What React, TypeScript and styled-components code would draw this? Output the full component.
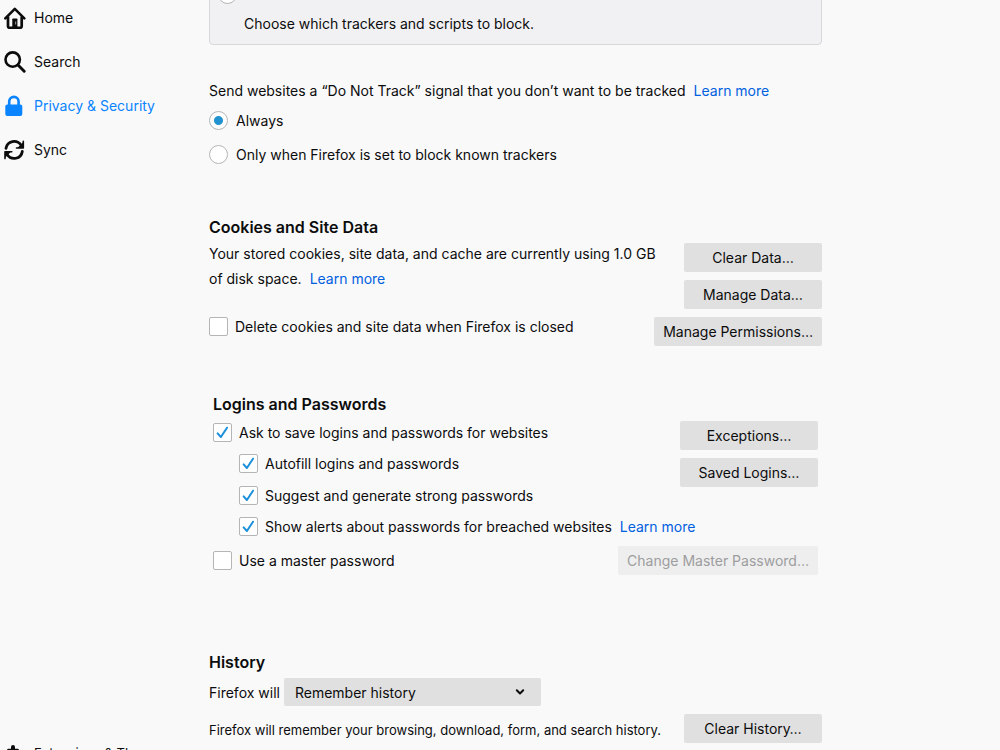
import React from "react";
import styled, { createGlobalStyle, css } from "styled-components";

const GlobalStyle = createGlobalStyle`
  *, *::before, *::after { box-sizing: border-box; }
  body {
    margin: 0;
    background: #f9f9f9;
    color: #0c0c0d;
    font-family: Inter, "Liberation Sans", sans-serif;
    font-size: 14px;
    line-height: 25px;
  }
  button, select, input { font: inherit; color: inherit; margin: 0; }
`;

const Page = styled.div`
  display: flex;
  height: 100vh;
  overflow: hidden;
`;

const Sidebar = styled.aside`
  display: flex;
  flex-direction: column;
  flex: 0 0 209px;
`;

const Categories = styled.nav`
  display: flex;
  flex-direction: column;
  margin-top: -4px;
`;

const Footer = styled.div`
  margin-top: auto;
  margin-bottom: -25px;
`;

const Category = styled.a<{ $active?: boolean; $small?: boolean }>`
  display: flex;
  align-items: center;
  gap: 8px;
  height: 44px;
  padding-left: 4px;
  color: ${(p) => (p.$active ? "#0a84ff" : "#0c0c0d")};
  font-size: ${(p) => (p.$small ? 13 : 14)}px;
  line-height: 24px;
  text-decoration: none;
  white-space: nowrap;

  svg { width: 22px; height: 22px; flex: none; }
`;

const Content = styled.main`
  flex: 1;
  min-width: 0;
  max-width: 613px;
`;

const TrackingCard = styled.div`
  margin-top: -40px;
  padding: 24px 8px 8px;
  border: 1px solid #d8d8da;
  border-radius: 4px;
  background: #f1f1f3;
`;

const CardDescription = styled.p`
  margin: 7px 0 0 26px;
`;

const Section = styled.section<{ $top: number; $inset?: boolean }>`
  margin-top: ${(p) => p.$top}px;
  padding: ${(p) => (p.$inset ? "0 4px" : "0")};
`;

const Heading = styled.h2`
  margin: 0;
  font-size: 16px;
  font-weight: 600;
  line-height: 28px;
`;

const Text = styled.p<{ $small?: boolean }>`
  margin: 0;
  font-size: ${(p) => (p.$small ? 13 : 14)}px;
`;

const Link = styled.a`
  margin-left: 8px;
  color: #0060df;
  text-decoration: none;
`;

const Columns = styled.div<{ $top?: number; $align?: string }>`
  display: flex;
  justify-content: space-between;
  align-items: ${(p) => p.$align || "flex-start"};
  gap: 20px;
  padding-top: ${(p) => p.$top || 0}px;
`;

const Column = styled.div`
  flex: 1;
  min-width: 0;
`;

const Buttons = styled.div<{ $top: number }>`
  display: flex;
  flex-direction: column;
  gap: 8px;
  padding-top: ${(p) => p.$top}px;
`;

const Button = styled.button`
  flex: none;
  min-width: 138px;
  height: 29px;
  padding: 0 9px;
  border: 0;
  border-radius: 2px;
  background: #e0e0e0;
  line-height: 29px;
  white-space: nowrap;

  &:disabled { background: #eeeeee; color: #9d9d9e; }
`;

const Options = styled.div<{ $indent?: boolean }>`
  display: flex;
  flex-direction: column;
  padding: ${(p) => (p.$indent ? "1px 0 0 26px" : "0")};
`;

const Option = styled.div<{ $height: number }>`
  display: flex;
  align-items: center;
  height: ${(p) => p.$height}px;
  white-space: nowrap;

  label { padding-left: 8px; }
  span + label { padding-left: 7px; }
`;

const control = css`
  appearance: none;
  flex: none;
  display: block;
  width: 19px;
  height: 19px;
  border: 1px solid #b5b5b7;
  background: #fff center / 100% no-repeat;
`;

const Radio = styled.input.attrs({ type: "radio" })`
  ${control}
  border-radius: 50%;
  &:checked { background-image: radial-gradient(circle, #2292d0 4px, transparent 5px); }
`;

const CheckFrame = styled.span`
  display: grid;
  flex: none;

  > * { grid-area: 1 / 1; }
  svg { width: 19px; height: 19px; pointer-events: none; visibility: hidden; }
  input:checked + svg { visibility: visible; }
`;

const CheckInput = styled.input.attrs({ type: "checkbox" })`
  ${control}
  border-radius: 2px;
`;

const HistoryRow = styled.div`
  display: flex;
  align-items: center;
  gap: 4px;
  padding-top: 2px;
`;

const SelectFrame = styled.span`
  display: grid;
  align-items: center;
  width: 257px;

  > * { grid-area: 1 / 1; }
  svg { justify-self: end; width: 10px; height: 8px; margin-right: 16px; pointer-events: none; }
`;

const Select = styled.select`
  appearance: none;
  height: 28px;
  padding: 0 11px;
  border: 0;
  border-radius: 2px;
  background: #e0e0e0;
`;

type CheckboxProps = { id: string; label: string; height: number; checked?: boolean; children?: React.ReactNode };

function Checkbox({ id, label, height, checked, children }: CheckboxProps) {
  return (
    <Option $height={height}>
      <CheckFrame>
        <CheckInput id={id} defaultChecked={checked} />
        <svg viewBox="0 0 19 19" fill="none" stroke="#1a8fdb" strokeWidth="2" aria-hidden="true">
          <path d="M4.6 10.4 7.9 14 14 4.7" strokeLinecap="round" strokeLinejoin="round" />
        </svg>
      </CheckFrame>
      <label htmlFor={id}>{label}</label>
      {children}
    </Option>
  );
}

const HomeIcon = () => (
  <svg viewBox="0 0 22 22" fill="none" stroke="currentColor" aria-hidden="true">
    <path d="M1.3 11.4 10.8 1.9l9.5 9.5" strokeWidth="2.6" strokeLinecap="round" strokeLinejoin="round" />
    <path d="M4 9.5v9.7q0 1.6 1.6 1.6h10.5q1.6 0 1.6-1.6V9.5" strokeWidth="2.7" />
    <path d="M8.3 21v-8.7q0-.8.8-.8h3.5q.8 0 .8.8V21Z" fill="currentColor" stroke="none" />
    <path d="M11.6 14.5v3" stroke="#8a8a8a" strokeWidth="1.2" />
  </svg>
);

const SearchIcon = () => (
  <svg viewBox="0 0 22 22" fill="none" stroke="currentColor" strokeLinecap="round" aria-hidden="true">
    <circle cx="8.7" cy="8.6" r="7.2" strokeWidth="2.6" />
    <path d="m14 14 6.2 6.3" strokeWidth="2.9" />
  </svg>
);

const LockIcon = () => (
  <svg viewBox="0 0 22 22" aria-hidden="true">
    <path d="M5.2 11V6.6a4.7 4.7 0 0 1 9.4 0V11" fill="none" stroke="currentColor" strokeWidth="2.6" />
    <rect x="1.3" y="9.6" width="17" height="11.4" rx="2" fill="currentColor" />
  </svg>
);

const SyncIcon = () => (
  <svg viewBox="0 0 22 22" fill="none" stroke="currentColor" strokeWidth="2.8" strokeLinecap="round" aria-hidden="true">
    <path d="M2 9.3C3.2 1.8 12.8-.2 17.2 6.3" />
    <path d="M19.3 2.2v6.8h-6.8" strokeWidth="1.6" strokeLinejoin="round" />
    <path d="M19.3 3v6h-6Z" fill="currentColor" stroke="none" />
    <path d="M18.3 12.5C17.1 20 7.5 22 3.1 15.5" />
    <path d="M1 19.6v-6.8h6.8" strokeWidth="1.6" strokeLinejoin="round" />
    <path d="M1 18.8v-6h6Z" fill="currentColor" stroke="none" />
  </svg>
);

const ExtensionsIcon = () => (
  <svg viewBox="0 0 22 22" fill="currentColor" aria-hidden="true">
    <path d="M7 6.7V5a2 2 0 0 1 4 0v1.7h2.4q1.6 0 1.6 1.6V12h1.500a2 2 0 0 1 0 4H15v3.500q0 1.500-1.500 1.500h-9Q3 21 3 19.500V16h1.500a2 2 0 0 0 0-4H3V8.300q0-1.600 1.600-1.600Z" />
  </svg>
);

export default function App() {
  return (
    <>
      <GlobalStyle />
      <Page>
        <Sidebar>
          <Categories>
            <Category href="#home"><HomeIcon />Home</Category>
            <Category href="#search"><SearchIcon />Search</Category>
            <Category href="#privacy" $active><LockIcon />Privacy &amp; Security</Category>
            <Category href="#sync"><SyncIcon />Sync</Category>
          </Categories>
          <Footer>
            <Category href="#addons" $small><ExtensionsIcon />Extensions &amp; Themes</Category>
          </Footer>
        </Sidebar>

        <Content>
          <TrackingCard>
            <Radio name="blocking" aria-label="Custom" />
            <CardDescription>Choose which trackers and scripts to block.</CardDescription>
          </TrackingCard>

          <Section $top={33}>
            <Text>
              Send websites a “Do Not Track” signal that you don’t want to be tracked
              <Link href="#dnt">Learn more</Link>
            </Text>
            <Options>
              <Option $height={34}>
                <Radio id="dnt-always" name="dnt" defaultChecked />
                <label htmlFor="dnt-always">Always</label>
              </Option>
              <Option $height={34}>
                <Radio id="dnt-known" name="dnt" />
                <label htmlFor="dnt-known">Only when Firefox is set to block known trackers</label>
              </Option>
            </Options>
          </Section>

          <Section $top={42}>
            <Heading>Cookies and Site Data</Heading>
            <Columns>
              <Column>
                <Text>
                  Your stored cookies, site data, and cache are currently using 1.0 GB
                  of disk space.
                  <Link href="#storage">Learn more</Link>
                </Text>
              </Column>
              <Buttons $top={2}>
                <Button type="button">Clear Data…</Button>
                <Button type="button">Manage Data…</Button>
              </Buttons>
            </Columns>
            <Columns $top={8}>
              <Checkbox id="delete-cookies" label="Delete cookies and site data when Firefox is closed" height={19} />
              <Button type="button">Manage Permissions…</Button>
            </Columns>
          </Section>

          <Section $top={44} $inset>
            <Heading>Logins and Passwords</Heading>
            <Columns>
              <Column>
                <Checkbox id="ask-save" label="Ask to save logins and passwords for websites" height={29} checked />
                <Options $indent>
                  <Checkbox id="autofill" label="Autofill logins and passwords" height={31} checked />
                  <Checkbox id="suggest" label="Suggest and generate strong passwords" height={32} checked />
                  <Checkbox id="alerts" label="Show alerts about passwords for breached websites" height={31} checked>
                    <Link href="#breach">Learn more</Link>
                  </Checkbox>
                </Options>
              </Column>
              <Buttons $top={3}>
                <Button type="button">Exceptions…</Button>
                <Button type="button">Saved Logins…</Button>
              </Buttons>
            </Columns>
            <Columns $align="center">
              <Checkbox id="master" label="Use a master password" height={37} />
              <Button type="button" disabled>Change Master Password…</Button>
            </Columns>
          </Section>

          <Section $top={69}>
            <Heading>History</Heading>
            <HistoryRow>
              <label htmlFor="history">Firefox will</label>
              <SelectFrame>
                <Select id="history" defaultValue="remember">
                  <option value="remember">Remember history</option>
                  <option value="never">Never remember history</option>
                  <option value="custom">Use custom settings for history</option>
                </Select>
                <svg viewBox="0 0 10 8" fill="none" stroke="#0c0c0d" strokeWidth="2" aria-hidden="true">
                  <path d="m1.8 2.3 3.2 3.2 3.2-3.2" strokeLinecap="round" strokeLinejoin="round" />
                </svg>
              </SelectFrame>
            </HistoryRow>
            <Columns $top={8} $align="flex-end">
              <Text $small>Firefox will remember your browsing, download, form, and search history.</Text>
              <Button type="button">Clear History…</Button>
            </Columns>
          </Section>
        </Content>
      </Page>
    </>
  );
}
